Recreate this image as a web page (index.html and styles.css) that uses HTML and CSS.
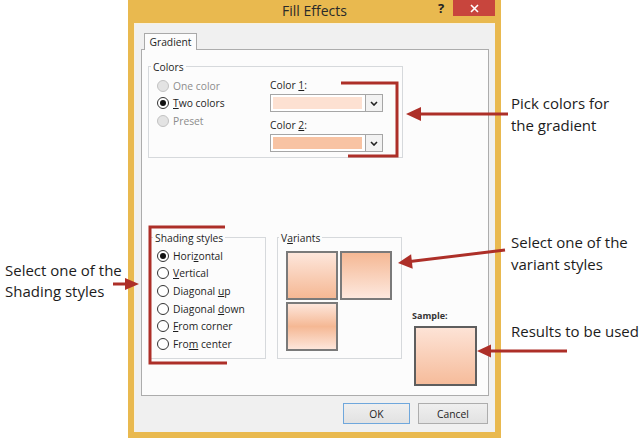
FILE: index.html
```html
<!DOCTYPE html>
<html lang="en">
<head>
<meta charset="utf-8">
<title>Fill Effects</title>
<link rel="stylesheet" href="styles.css">
</head>
<body>
<div class="page">
  <div class="note-col left">
    <p class="note note-shading">Select one of the<br>Shading styles</p>
  </div>

  <div class="window">
    <div class="titlebar">
      <span></span>
      <span class="title">Fill Effects</span>
      <div class="controls">
        <span class="help">?</span>
        <span class="close"><svg width="9" height="9" viewBox="0 0 9 9"><path d="M1 1 L8 8 M8 1 L1 8" stroke="#fff" stroke-width="1.6" fill="none"/></svg></span>
      </div>
    </div>
    <div class="client">
      <div class="tabs"><span class="tab">Gradient</span></div>
      <div class="panel">
        <div class="group colors">
          <span class="group-title">Colors</span>
          <div class="colors-body">
            <div class="radios">
              <div class="radio-row disabled"><span class="radio"></span><span>One color</span></div>
              <div class="radio-row"><span class="radio checked"></span><span><u>T</u>wo colors</span></div>
              <div class="radio-row disabled"><span class="radio"></span><span>Preset</span></div>
            </div>
            <div class="pickers">
              <div class="picker-label">Color <u>1</u>:</div>
              <div class="dropdown"><span class="swatch light"></span><span class="drop-btn"><svg width="8" height="5" viewBox="0 0 8 5"><path d="M1 1 L4 4 L7 1" stroke="#222" stroke-width="1.6" fill="none"/></svg></span></div>
              <div class="picker-label second">Color <u>2</u>:</div>
              <div class="dropdown"><span class="swatch dark"></span><span class="drop-btn"><svg width="8" height="5" viewBox="0 0 8 5"><path d="M1 1 L4 4 L7 1" stroke="#222" stroke-width="1.6" fill="none"/></svg></span></div>
            </div>
          </div>
        </div>

        <div class="lower">
          <div class="group shading">
            <span class="group-title">Shading styles</span>
            <div class="shading-body">
              <div class="radio-row"><span class="radio checked"></span><span>Hori<u>z</u>ontal</span></div>
              <div class="radio-row"><span class="radio"></span><span><u>V</u>ertical</span></div>
              <div class="radio-row"><span class="radio"></span><span>Diagonal <u>u</u>p</span></div>
              <div class="radio-row"><span class="radio"></span><span>Diagonal <u>d</u>own</span></div>
              <div class="radio-row"><span class="radio"></span><span><u>F</u>rom corner</span></div>
              <div class="radio-row"><span class="radio"></span><span>Fro<u>m</u> center</span></div>
            </div>
          </div>
          <div class="group variants">
            <span class="group-title">V<u>a</u>riants</span>
            <div class="tiles">
              <span class="tile t1"></span>
              <span class="tile t2"></span>
              <span class="tile t3"></span>
            </div>
          </div>
          <div class="sample">
            <div class="sample-label">Sample:</div>
            <div class="sample-box"></div>
          </div>
        </div>
      </div>
      <div class="buttons">
        <button class="btn default">OK</button>
        <button class="btn cancel">Cancel</button>
      </div>
    </div>
  </div>

  <div class="note-col right">
    <p class="note n1">Pick colors for<br>the gradient</p>
    <p class="note n2">Select one of the<br>variant styles</p>
    <p class="note n3">Results to be used</p>
  </div>

  <svg class="marks" width="641" height="439" viewBox="0 0 641 439">
    <g fill="none" stroke="#ad2f28" stroke-width="3">
      <polyline points="341,83 397,83 397,156 348,156"/>
      <polyline points="225,227 150,227 150,363 227,363"/>
      <line x1="508" y1="114" x2="418" y2="114"/>
      <line x1="505" y1="250" x2="410" y2="261.6"/>
      <line x1="567" y1="351" x2="489" y2="351"/>
      <line x1="113" y1="284" x2="127" y2="284"/>
    </g>
    <g fill="#ad2f28">
      <polygon points="406,114 421,107 421,121"/>
      <polygon points="398,263 412.7,268.8 411.1,254.2"/>
      <polygon points="477,351 491,344.5 491,357.5"/>
      <polygon points="139,284 125,278 125,290"/>
    </g>
  </svg>
</div>
</body>
</html>
```

FILE: styles.css
```css
html, body {
  margin: 0;
  padding: 0;
  background: #ffffff;
}

.page {
  position: relative;
  width: 641px;
  height: 439px;
  display: grid;
  grid-template-columns: 128px 373px 140px;
  font-family: "Open Sans", "Noto Sans", sans-serif;
  overflow: hidden;
}

/* annotation text */
.note {
  margin: 0;
  font-family: "Open Sans", "Noto Sans", sans-serif;
  font-size: 15px;
  line-height: 22px;
  color: #1c1c1c;
  white-space: nowrap;
}
.note-col.left {
  padding-left: 5px;
}
.note-shading {
  margin-top: 260px;
  line-height: 21px;
}
.note-col.right {
  padding-left: 10px;
}
.n1 { margin-top: 92px; }
.n2 { margin-top: 95px; }
.n3 { margin-top: 45px; }

/* window */
.window {
  height: 438px;
  box-sizing: border-box;
  background: #e9b94f;
  padding: 0 6px 6px;
  display: flex;
  flex-direction: column;
}
.titlebar {
  height: 23px;
  flex: none;
  display: grid;
  grid-template-columns: 64px 1fr 64px;
  align-items: start;
}
.title {
  text-align: center;
  font-size: 14px;
  line-height: 22px;
  color: #2a2a2a;
}
.controls {
  display: flex;
  justify-content: flex-end;
}
.help {
  width: 20px;
  margin-right: 2px;
  text-align: center;
  font-weight: bold;
  font-size: 13px;
  line-height: 17px;
  color: #222;
}
.close {
  width: 42px;
  height: 16px;
  background: #c8453d;
  display: grid;
  place-items: center;
}
.close svg { display: block; }

.client {
  flex: 1;
  background: #f0f0f0;
  padding: 10px 6px 0 7px;
  box-shadow: inset 1px 1px 0 #f8f1e0;
  font-size: 10.3px;
  color: #1e1e1e;
}

.tabs {
  display: flex;
  padding-left: 3px;
  position: relative;
  z-index: 1;
  margin-bottom: -1px;
}
.tab {
  width: 53px;
  height: 17px;
  box-sizing: border-box;
  border: 1px solid #a9a9a9;
  border-bottom: none;
  background: #fcfcfc;
  text-align: center;
  line-height: 16px;
}

.panel {
  height: 347px;
  box-sizing: border-box;
  border: 1px solid #acacac;
  background: #fcfcfc;
  padding: 16px 6px 0 6px;
}

.group {
  box-sizing: border-box;
  border: 1px solid #d6d9dc;
}
.group-title {
  display: table;
  margin-top: -7px;
  padding: 0 2px;
  line-height: 14px;
  background: #fcfcfc;
  margin-left: 2px;
}

.colors {
  width: 255px;
}
.colors-body {
  display: grid;
  grid-template-columns: 1fr 113px;
  padding: 3px 19px 5px 8px;
}

.radio-row {
  display: flex;
  align-items: center;
  gap: 4px;
  height: 17.5px;
  white-space: nowrap;
}
.radio {
  flex: none;
  width: 12px;
  height: 12px;
  box-sizing: border-box;
  border-radius: 50%;
  border: 1px solid #333;
  background: #fff;
  display: grid;
  place-items: center;
}
.radio.checked::after {
  content: "";
  width: 6px;
  height: 6px;
  border-radius: 50%;
  background: #111;
}
.radio-row.disabled { color: #8c8c8c; }
.radio-row.disabled .radio {
  background: #e3e3e3;
  border-color: #c2c2c2;
}

.picker-label {
  line-height: 16px;
  margin-bottom: 1px;
}
.picker-label.second { margin-top: 5px; }
.dropdown {
  display: flex;
  height: 18px;
  box-sizing: border-box;
  border: 1px solid #a6a6a6;
  background: #fff;
}
.swatch {
  flex: 1;
  margin: 2px 3px 2px 2px;
}
.swatch.light { background: #fde1d2; }
.swatch.dark { background: #f8c3a3; }
.drop-btn {
  width: 17px;
  box-sizing: border-box;
  border-left: 1px solid #a6a6a6;
  background: #f2f2f2;
  display: grid;
  place-items: center;
}
.drop-btn svg { display: block; }

.lower {
  display: flex;
  align-items: flex-start;
  margin-top: 79px;
}
.shading {
  width: 116px;
  height: 122px;
  margin-left: 2px;
}
.shading-body {
  padding: 2px 0 0 6px;
}
.shading-body .radio-row { height: 17.6px; }

.variants {
  width: 125px;
  height: 122px;
  margin-left: 11px;
}
.variants .group-title { margin-left: 1px; }
.tiles {
  display: grid;
  grid-template-columns: 52px 52px;
  grid-template-rows: 49px 49px;
  gap: 2px;
  padding: 6px 0 0 8px;
}
.tile {
  box-sizing: border-box;
  border: 2px solid #7a7a7a;
}
.t1 { background: linear-gradient(#fde6db, #f5b894); }
.t2 { background: linear-gradient(#f5b894, #fde8de); }
.t3 { background: linear-gradient(#fde6db, #f5b894 50%, #fde6db); }

.sample {
  margin-left: 10px;
  padding-top: 73px;
}
.sample-label {
  font-size: 9px;
  font-weight: bold;
  line-height: 12px;
  color: #333;
}
.sample-box {
  width: 63px;
  height: 60px;
  box-sizing: border-box;
  margin: 4px 0 0 2px;
  border: 2px solid #5e5e5e;
  background: linear-gradient(#fde3d6, #f6bc9b);
}

.buttons {
  display: flex;
  justify-content: flex-end;
  gap: 8px;
  margin-top: 7px;
  padding-right: 1px;
}
.btn {
  height: 21px;
  width: 67px;
  box-sizing: border-box;
  border: 1px solid #adadad;
  background: linear-gradient(#efefef, #e2e2e2);
  font-family: "Open Sans", "Noto Sans", sans-serif;
  font-size: 10.3px;
  color: #1e1e1e;
  padding: 0;
}
.btn.default { border-color: #6fa7dc; }
.btn.cancel { width: 70px; }

.marks {
  position: absolute;
  left: 0;
  top: 0;
  pointer-events: none;
}
```
